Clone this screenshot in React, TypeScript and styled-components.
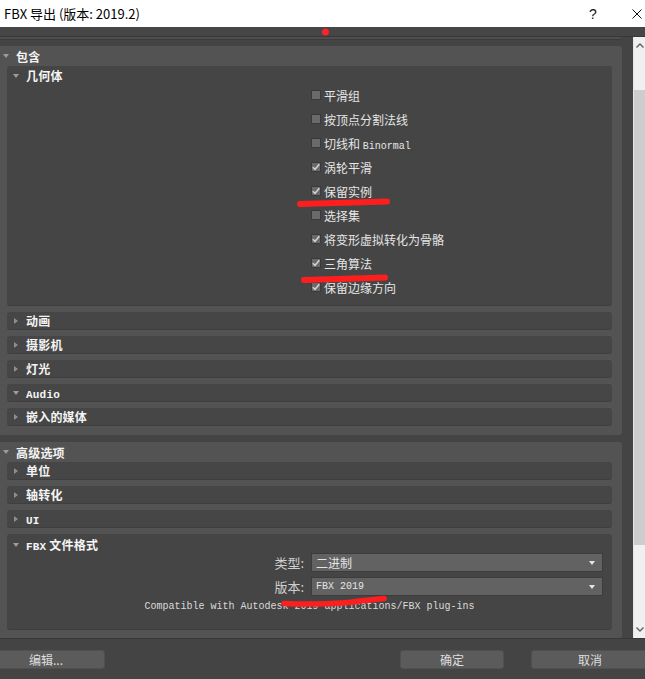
import React from "react";
import styled, { createGlobalStyle } from "styled-components";

const CJK = `"Noto Sans CJK SC", "Noto Sans", sans-serif`;
const MONO = `"Liberation Mono", "DejaVu Sans Mono", monospace`;

const GlobalStyle = createGlobalStyle`
  html, body { margin: 0; padding: 0; background: #444444; }
  body { font-family: ${CJK}; }
  #root { width: 645px; height: 679px; }
  * { box-sizing: border-box; }
`;

const Window = styled.div`
  position: relative;
  width: 645px;
  height: 679px;
  display: flex;
  flex-direction: column;
  background: #444444;
  overflow: hidden;
`;

const TitleBar = styled.div`
  height: 27px;
  flex: none;
  background: #ffffff;
  display: flex;
  align-items: center;
  padding-left: 4px;
  font: 13px ${CJK};
  color: #000;
`;

const Title = styled.div`
  flex: 1;
  white-space: nowrap;
`;

const HelpButton = styled.div`
  width: 12px;
  margin-right: 32px;
  text-align: center;
  font: 14px "Liberation Sans", sans-serif;
  color: #111;
`;

const CloseButton = styled.div`
  width: 12px;
  margin-right: 2px;
  display: flex;
  align-items: center;
  justify-content: center;
`;

const TopStrip = styled.div`
  height: 10px;
  flex: none;
  background: #464646;
  border-bottom: 1px solid #383838;
`;

const Body = styled.div`
  flex: 1;
  display: flex;
  min-height: 0;
  border-bottom: 1px solid #383838;
`;

const Viewport = styled.div`
  flex: 1;
  overflow: hidden;
  display: flex;
  flex-direction: column;
`;

const PrevEdge = styled.div`
  width: 622px;
  height: 3px;
  flex: none;
  background: #4e4e4e;
  border-bottom: 1px solid #3b3b3b;
  border-radius: 0 0 3px 0;
  margin-bottom: 6px;
`;

const OuterPanel = styled.div<{ $gapTop?: number }>`
  width: 622px;
  flex: none;
  background: #535353;
  border-radius: 0 3px 3px 0;
  margin-top: ${(p) => p.$gapTop ?? 0}px;
  padding-bottom: 9px;
`;

const OuterHeader = styled.div`
  height: 20px;
  display: flex;
  align-items: center;
  gap: 7px;
  padding-left: 3px;
`;

const HeaderText = styled.span`
  font: bold 12px ${CJK};
  color: #f4f4f4;
  letter-spacing: 0.2px;
  white-space: nowrap;
`;

const Latin = styled.span<{ $bold?: boolean; $size?: number }>`
  font-family: ${MONO};
  font-size: ${(p) => p.$size ?? 10}px;
  font-weight: ${(p) => (p.$bold ? "bold" : "normal")};
`;

const OuterContent = styled.div`
  display: flex;
  flex-direction: column;
  gap: 6px;
  padding: 0 10px 0 7px;
`;

const InnerPanel = styled.div<{ $padBottom: number }>`
  background: #454545;
  border-radius: 3px;
  border-bottom: 1px solid #3e3e3e;
  padding-bottom: ${(p) => p.$padBottom}px;
`;

const InnerHeader = styled.div<{ $h: number }>`
  height: ${(p) => p.$h}px;
  padding-top: 2px;
  display: flex;
  align-items: center;
  gap: 7px;
  padding-left: 6px;
`;

const CollapsedRow = styled.div`
  height: 18px;
  background: #464646;
  border-radius: 3px;
  border-bottom: 1px solid #3f3f3f;
  display: flex;
  align-items: center;
  gap: 7px;
  padding-left: 6px;
`;

const TriBox = styled.span`
  width: 6px;
  height: 6px;
  flex: none;
  display: flex;
  align-items: center;
  justify-content: center;
`;

const Tri = styled.span<{ $open?: boolean }>`
  width: 0;
  height: 0;
  ${(p) =>
    p.$open
      ? `border-left: 3px solid transparent; border-right: 3px solid transparent; border-top: 4px solid #9c9c9c;`
      : `border-top: 3px solid transparent; border-bottom: 3px solid transparent; border-left: 4px solid #8e8e8e;`}
`;

const FormGrid = styled.div`
  display: grid;
  grid-template-columns: 1fr 292px;
  column-gap: 6px;
  padding-right: 9px;
`;

const CheckRow = styled.label`
  grid-column: 2;
  height: 24px;
  display: flex;
  align-items: center;
  gap: 3px;
  font: 12px ${CJK};
  color: #e6e6e6;
  white-space: nowrap;
`;

const Box = styled.span`
  width: 10px;
  height: 10px;
  flex: none;
  background: #6a6a6a;
  border: 1px solid #3a3a3a;
  display: flex;
  align-items: center;
  justify-content: center;
`;

const FieldLabel = styled.div`
  grid-column: 1;
  height: 19px;
  display: flex;
  align-items: center;
  justify-content: flex-end;
  padding-right: 1px;
  font: 13px ${CJK};
  color: #cfcfcf;
`;

const Select = styled.div`
  grid-column: 2;
  height: 19px;
  background: #626262;
  border: 1px solid #3c3c3c;
  display: flex;
  align-items: center;
  justify-content: space-between;
  padding: 0 7px 0 4px;
  font: 12px ${CJK};
  color: #e4e4e4;
`;

const SelectArrow = styled.span`
  width: 0;
  height: 0;
  border-left: 3px solid transparent;
  border-right: 3px solid transparent;
  border-top: 4px solid #e6e6e6;
`;

const RowGap = styled.div`
  grid-column: 1 / span 2;
  height: 5px;
`;

const Compat = styled.div`
  margin-top: 5px;
  height: 14px;
  line-height: 14px;
  text-align: center;
  font: 10px ${MONO};
  color: #dadada;
  white-space: nowrap;
`;

const ScrollBar = styled.div`
  width: 12px;
  flex: none;
  background: #f0f0f0;
  display: flex;
  flex-direction: column;
  border-left: 1px solid #e6e6e6;
`;

const ScrollArrow = styled.div`
  height: 17px;
  flex: none;
  display: flex;
  align-items: center;
  justify-content: center;
`;

const Track = styled.div`
  flex: 1;
  display: flex;
  flex-direction: column;
`;

const Thumb = styled.div`
  margin-top: 36px;
  height: 455px;
  background: #cdcdcd;
`;

const Footer = styled.div`
  height: 40px;
  flex: none;
  display: flex;
  align-items: flex-start;
  padding-top: 11px;
`;

const Button = styled.div<{ $w: number; $edge?: "left" | "right" }>`
  width: ${(p) => p.$w}px;
  height: 19px;
  flex: none;
  background: #5b5b5b;
  border: 1px solid #505050;
  border-radius: 3px;
  display: flex;
  align-items: center;
  justify-content: center;
  font: 12px ${CJK};
  color: #dedede;
  margin-left: ${(p) => (p.$edge === "left" ? "-13px" : "0")};
  margin-right: ${(p) => (p.$edge === "right" ? "-4px" : "0")};
`;

const Spacer = styled.div`
  flex: 1;
`;

const ButtonGap = styled.div`
  width: 27px;
  flex: none;
`;

const Overlay = styled.svg`
  position: absolute;
  left: 0;
  top: 0;
  pointer-events: none;
`;

const Check = () => (
  <svg width="8" height="8" viewBox="0 0 8 8">
    <polyline points="0.8,4.2 3,6.4 7.3,1.2" fill="none" stroke="#d4d4d4" strokeWidth="1.6" />
  </svg>
);

const CheckItem: React.FC<{ checked?: boolean; children: React.ReactNode }> = ({ checked, children }) => (
  <CheckRow>
    <Box>{checked && <Check />}</Box>
    <span>{children}</span>
  </CheckRow>
);

const Collapsed: React.FC<{ open?: boolean; children: React.ReactNode }> = ({ open, children }) => (
  <CollapsedRow>
    <TriBox>
      <Tri $open={open} />
    </TriBox>
    <HeaderText>{children}</HeaderText>
  </CollapsedRow>
);

const checks: [string | React.ReactNode, boolean][] = [
  ["平滑组", false],
  ["按顶点分割法线", false],
  [
    <>
      切线和 <Latin>Binormal</Latin>
    </>,
    false,
  ],
  ["涡轮平滑", true],
  ["保留实例", true],
  ["选择集", false],
  ["将变形虚拟转化为骨骼", true],
  ["三角算法", true],
  ["保留边缘方向", true],
];

export default function App() {
  return (
    <Window>
      <GlobalStyle />
      <TitleBar>
        <Title>FBX 导出 (版本: 2019.2)</Title>
        <HelpButton>?</HelpButton>
        <CloseButton>
          <svg width="10" height="10" viewBox="0 0 10 10">
            <path d="M0.5 0.5 L9.5 9.5 M9.5 0.5 L0.5 9.5" stroke="#111" strokeWidth="1" fill="none" />
          </svg>
        </CloseButton>
      </TitleBar>
      <TopStrip />
      <Body>
        <Viewport>
          <PrevEdge />
          <OuterPanel>
            <OuterHeader>
              <TriBox>
                <Tri $open />
              </TriBox>
              <HeaderText>包含</HeaderText>
            </OuterHeader>
            <OuterContent>
              <InnerPanel $padBottom={6}>
                <InnerHeader $h={17}>
                  <TriBox>
                    <Tri $open />
                  </TriBox>
                  <HeaderText>几何体</HeaderText>
                </InnerHeader>
                <FormGrid>
                  {checks.map(([label, on], i) => (
                    <CheckItem key={i} checked={on}>
                      {label}
                    </CheckItem>
                  ))}
                </FormGrid>
              </InnerPanel>
              <Collapsed>动画</Collapsed>
              <Collapsed>摄影机</Collapsed>
              <Collapsed>灯光</Collapsed>
              <Collapsed open>
                <Latin $bold $size={11}>Audio</Latin>
              </Collapsed>
              <Collapsed>嵌入的媒体</Collapsed>
            </OuterContent>
          </OuterPanel>
          <OuterPanel $gapTop={7}>
            <OuterHeader>
              <TriBox>
                <Tri $open />
              </TriBox>
              <HeaderText>高级选项</HeaderText>
            </OuterHeader>
            <OuterContent>
              <Collapsed>单位</Collapsed>
              <Collapsed>轴转化</Collapsed>
              <Collapsed>
                <Latin $bold $size={11}>UI</Latin>
              </Collapsed>
              <InnerPanel $padBottom={14}>
                <InnerHeader $h={19}>
                  <TriBox>
                    <Tri $open />
                  </TriBox>
                  <HeaderText>
                    <Latin $bold $size={11}>FBX</Latin> 文件格式
                  </HeaderText>
                </InnerHeader>
                <FormGrid>
                  <FieldLabel>类型:</FieldLabel>
                  <Select>
                    <span>二进制</span>
                    <SelectArrow />
                  </Select>
                  <RowGap />
                  <FieldLabel>版本:</FieldLabel>
                  <Select>
                    <Latin>FBX 2019</Latin>
                    <SelectArrow />
                  </Select>
                </FormGrid>
                <Compat>Compatible with Autodesk 2019 applications/FBX plug-ins</Compat>
              </InnerPanel>
            </OuterContent>
          </OuterPanel>
        </Viewport>
        <ScrollBar>
          <ScrollArrow>
            <svg width="8" height="5" viewBox="0 0 8 5">
              <polyline points="0.5,4.5 4,1 7.5,4.5" fill="none" stroke="#606060" strokeWidth="1.4" />
            </svg>
          </ScrollArrow>
          <Track>
            <Thumb />
          </Track>
          <ScrollArrow>
            <svg width="8" height="5" viewBox="0 0 8 5">
              <polyline points="0.5,0.5 4,4 7.5,0.5" fill="none" stroke="#606060" strokeWidth="1.4" />
            </svg>
          </ScrollArrow>
        </ScrollBar>
      </Body>
      <Footer>
        <Button $w={118} $edge="left">编辑...</Button>
        <Spacer />
        <Button $w={104}>确定</Button>
        <ButtonGap />
        <Button $w={118} $edge="right">取消</Button>
      </Footer>
      <Overlay width="645" height="679" viewBox="0 0 645 679">
        <circle cx="325.5" cy="32" r="3.5" fill="#ff2424" />
        <path d="M300 204 Q 345 202.5 387 201.5" stroke="#ff1e1e" strokeWidth="6" strokeLinecap="round" fill="none" />
        <path d="M304 280 Q 345 278.5 385 277.5" stroke="#ff1e1e" strokeWidth="6" strokeLinecap="round" fill="none" />
        <path d="M284 603.5 C 310 605, 345 603.5, 360 601 L 384 598.5" stroke="#ff1e1e" strokeWidth="5.5" strokeLinecap="round" fill="none" />
      </Overlay>
    </Window>
  );
}
